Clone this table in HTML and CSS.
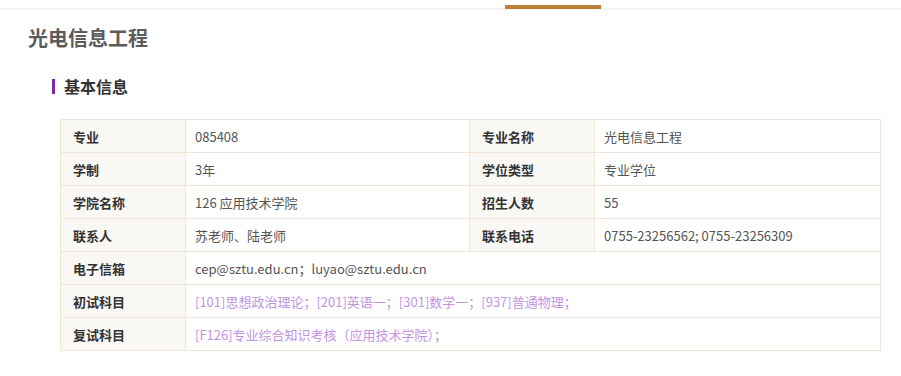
FILE: index.html
```html
<!DOCTYPE html>
<html lang="zh-CN">
<head>
<meta charset="utf-8">
<title>光电信息工程</title>
<link rel="stylesheet" href="styles.css">
</head>
<body>
<div class="topbar"><div class="tab-indicator"></div></div>
<h1 class="title">光电信息工程</h1>
<h2 class="section-title">基本信息</h2>
<table class="info">
  <colgroup>
    <col class="c-label"><col class="c-value1"><col class="c-label"><col class="c-value2">
  </colgroup>
  <tr><th>专业</th><td>085408</td><th>专业名称</th><td>光电信息工程</td></tr>
  <tr><th>学制</th><td>3年</td><th>学位类型</th><td>专业学位</td></tr>
  <tr><th>学院名称</th><td>126 应用技术学院</td><th>招生人数</th><td>55</td></tr>
  <tr><th>联系人</th><td>苏老师、陆老师</td><th>联系电话</th><td>0755-23256562; 0755-23256309</td></tr>
  <tr><th>电子信箱</th><td colspan="3">cep@sztu.edu.cn；luyao@sztu.edu.cn</td></tr>
  <tr><th>初试科目</th><td colspan="3" class="subject">[101]思想政治理论；[201]英语一；[301]数学一；[937]普通物理；</td></tr>
  <tr><th>复试科目</th><td colspan="3" class="subject">[F126]专业综合知识考核（应用技术学院）；</td></tr>
</table>
</body>
</html>
```
FILE: styles.css
```css
html, body {
  margin: 0;
  padding: 0;
  background: #fff;
  font-family: "Noto Sans CJK SC", "Noto Sans", sans-serif;
}
.topbar {
  display: flex;
  height: 3px;
  padding: 5px 0 0 505px;
  border-bottom: 2px solid #f6f2ed;
}
.tab-indicator {
  width: 96px;
  height: 4px;
  flex: none;
  background: #b98038;
}
.title {
  margin: 14px 0 0 28px;
  font-size: 20px;
  line-height: 28px;
  font-weight: bold;
  color: #5c5c5c;
}
.section-title {
  margin: 24px 0 0 52px;
  display: flex;
  align-items: center;
  gap: 9px;
  font-size: 16px;
  line-height: 20px;
  font-weight: bold;
  color: #333;
}
.section-title::before {
  content: "";
  width: 3px;
  height: 15px;
  background: #7b2aa4;
}
.info {
  margin: 23px 0 0 60px;
  width: 820px;
  border-collapse: collapse;
  table-layout: fixed;
  font-size: 13px;
}
.c-label { width: 125px; }
.c-value1 { width: 284px; }
.c-value2 { width: 286px; }
.info th, .info td {
  height: 33px;
  padding: 0;
  border: 1px solid #f2e5d7;
  text-align: left;
  vertical-align: middle;
  box-sizing: border-box;
}
.info th {
  padding-left: 12px;
  background: #faf8f5;
  font-weight: bold;
  color: #333;
}
.info td {
  padding-left: 9px;
  color: #555;
}
.info td.subject {
  color: #c294e0;
}
```
